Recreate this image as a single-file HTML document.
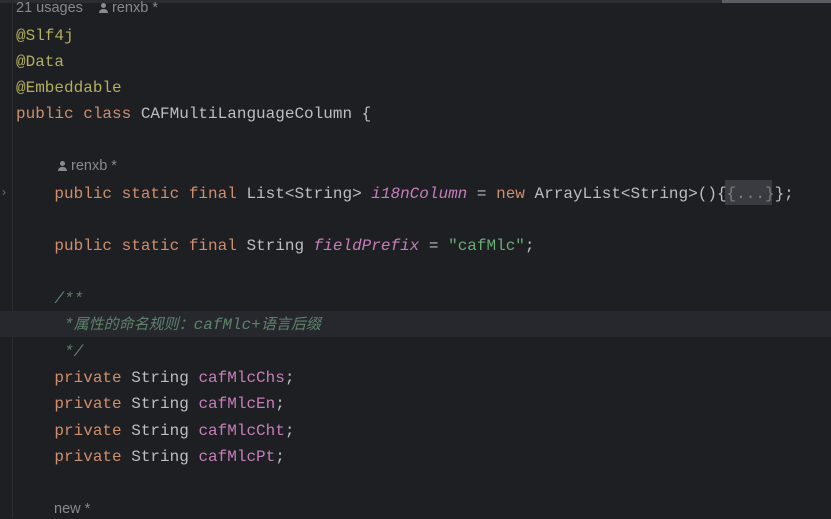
<!DOCTYPE html>
<html><head><meta charset="utf-8"><style>
html,body{margin:0;padding:0;width:831px;height:518px;overflow:hidden;background:#1e1f22;}
.l{position:absolute;left:16px;height:26px;line-height:26px;white-space:pre;font-family:"Liberation Mono","Noto Sans CJK SC",monospace;font-size:16px;color:#bcbec4;}
.h{position:absolute;height:20px;line-height:20px;white-space:pre;font-family:"Liberation Sans",sans-serif;font-size:14.5px;color:#868a91;}
.k{color:#cf8e6d}.a{color:#b3ae60}.f{color:#c77dbb}.i{font-style:italic}.s{color:#6aab73}.c{color:#5f826b;font-style:italic}
.z{font-size:15px;color:#5f826b}
.u{display:inline-block;width:9px;height:10px;position:relative;vertical-align:-1px;margin-right:4px}
.u:before{content:"";position:absolute;left:2px;top:0;width:5px;height:5px;border-radius:50%;background:#868a91}
.u:after{content:"";position:absolute;left:0;top:6px;width:9px;height:4px;border-radius:4px 4px 0 0;background:#868a91}
</style></head><body>
<div style="position:absolute;left:0;top:0;width:831px;height:3px;background:#2b2d30"></div>
<div style="position:absolute;left:722px;top:0;width:109px;height:3px;background:#5a5d63"></div>
<div style="position:absolute;left:12px;top:3px;width:1px;height:515px;background:#2b2d30"></div>
<div style="position:absolute;left:0;top:311px;width:831px;height:26px;background:#26282e"></div>
<div style="position:absolute;left:725px;top:180px;width:47px;height:25px;background:#393b40"></div>
<div style="position:absolute;left:2px;top:185px;color:#6f737a;font-family:'Liberation Sans';font-size:12px">›</div>

<div class="h" style="left:16px;top:-2px">21 usages    <span class="u"></span>renxb *</div>
<div class="l a" style="top:23px">@Slf4j</div>
<div class="l a" style="top:49px">@Data</div>
<div class="l a" style="top:75px">@Embeddable</div>
<div class="l" style="top:101px"><span class="k">public class</span> CAFMultiLanguageColumn {</div>
<div class="h" style="left:58px;top:156px"><span class="u"></span>renxb *</div>
<div class="l" style="top:181px">    <span class="k">public static final</span> List&lt;String&gt; <span class="f i">i18nColumn</span> = <span class="k">new</span> ArrayList&lt;String&gt;(){<span style="color:#7a7e85">{...}</span>};</div>
<div class="l" style="top:233px">    <span class="k">public static final</span> String <span class="f i">fieldPrefix</span> = <span class="s">"cafMlc"</span>;</div>
<div class="l c" style="top:286px">    /**</div>
<div class="l c" style="top:312px">     *<span class="z">属性的命名规则：</span>cafMlc+<span class="z">语言后缀</span></div>
<div class="l c" style="top:339px">     */</div>
<div class="l" style="top:365px">    <span class="k">private</span> String <span class="f">cafMlcChs</span>;</div>
<div class="l" style="top:391px">    <span class="k">private</span> String <span class="f">cafMlcEn</span>;</div>
<div class="l" style="top:418px">    <span class="k">private</span> String <span class="f">cafMlcCht</span>;</div>
<div class="l" style="top:444px">    <span class="k">private</span> String <span class="f">cafMlcPt</span>;</div>
<div class="h" style="left:54px;top:499px">new *</div>
</body></html>
